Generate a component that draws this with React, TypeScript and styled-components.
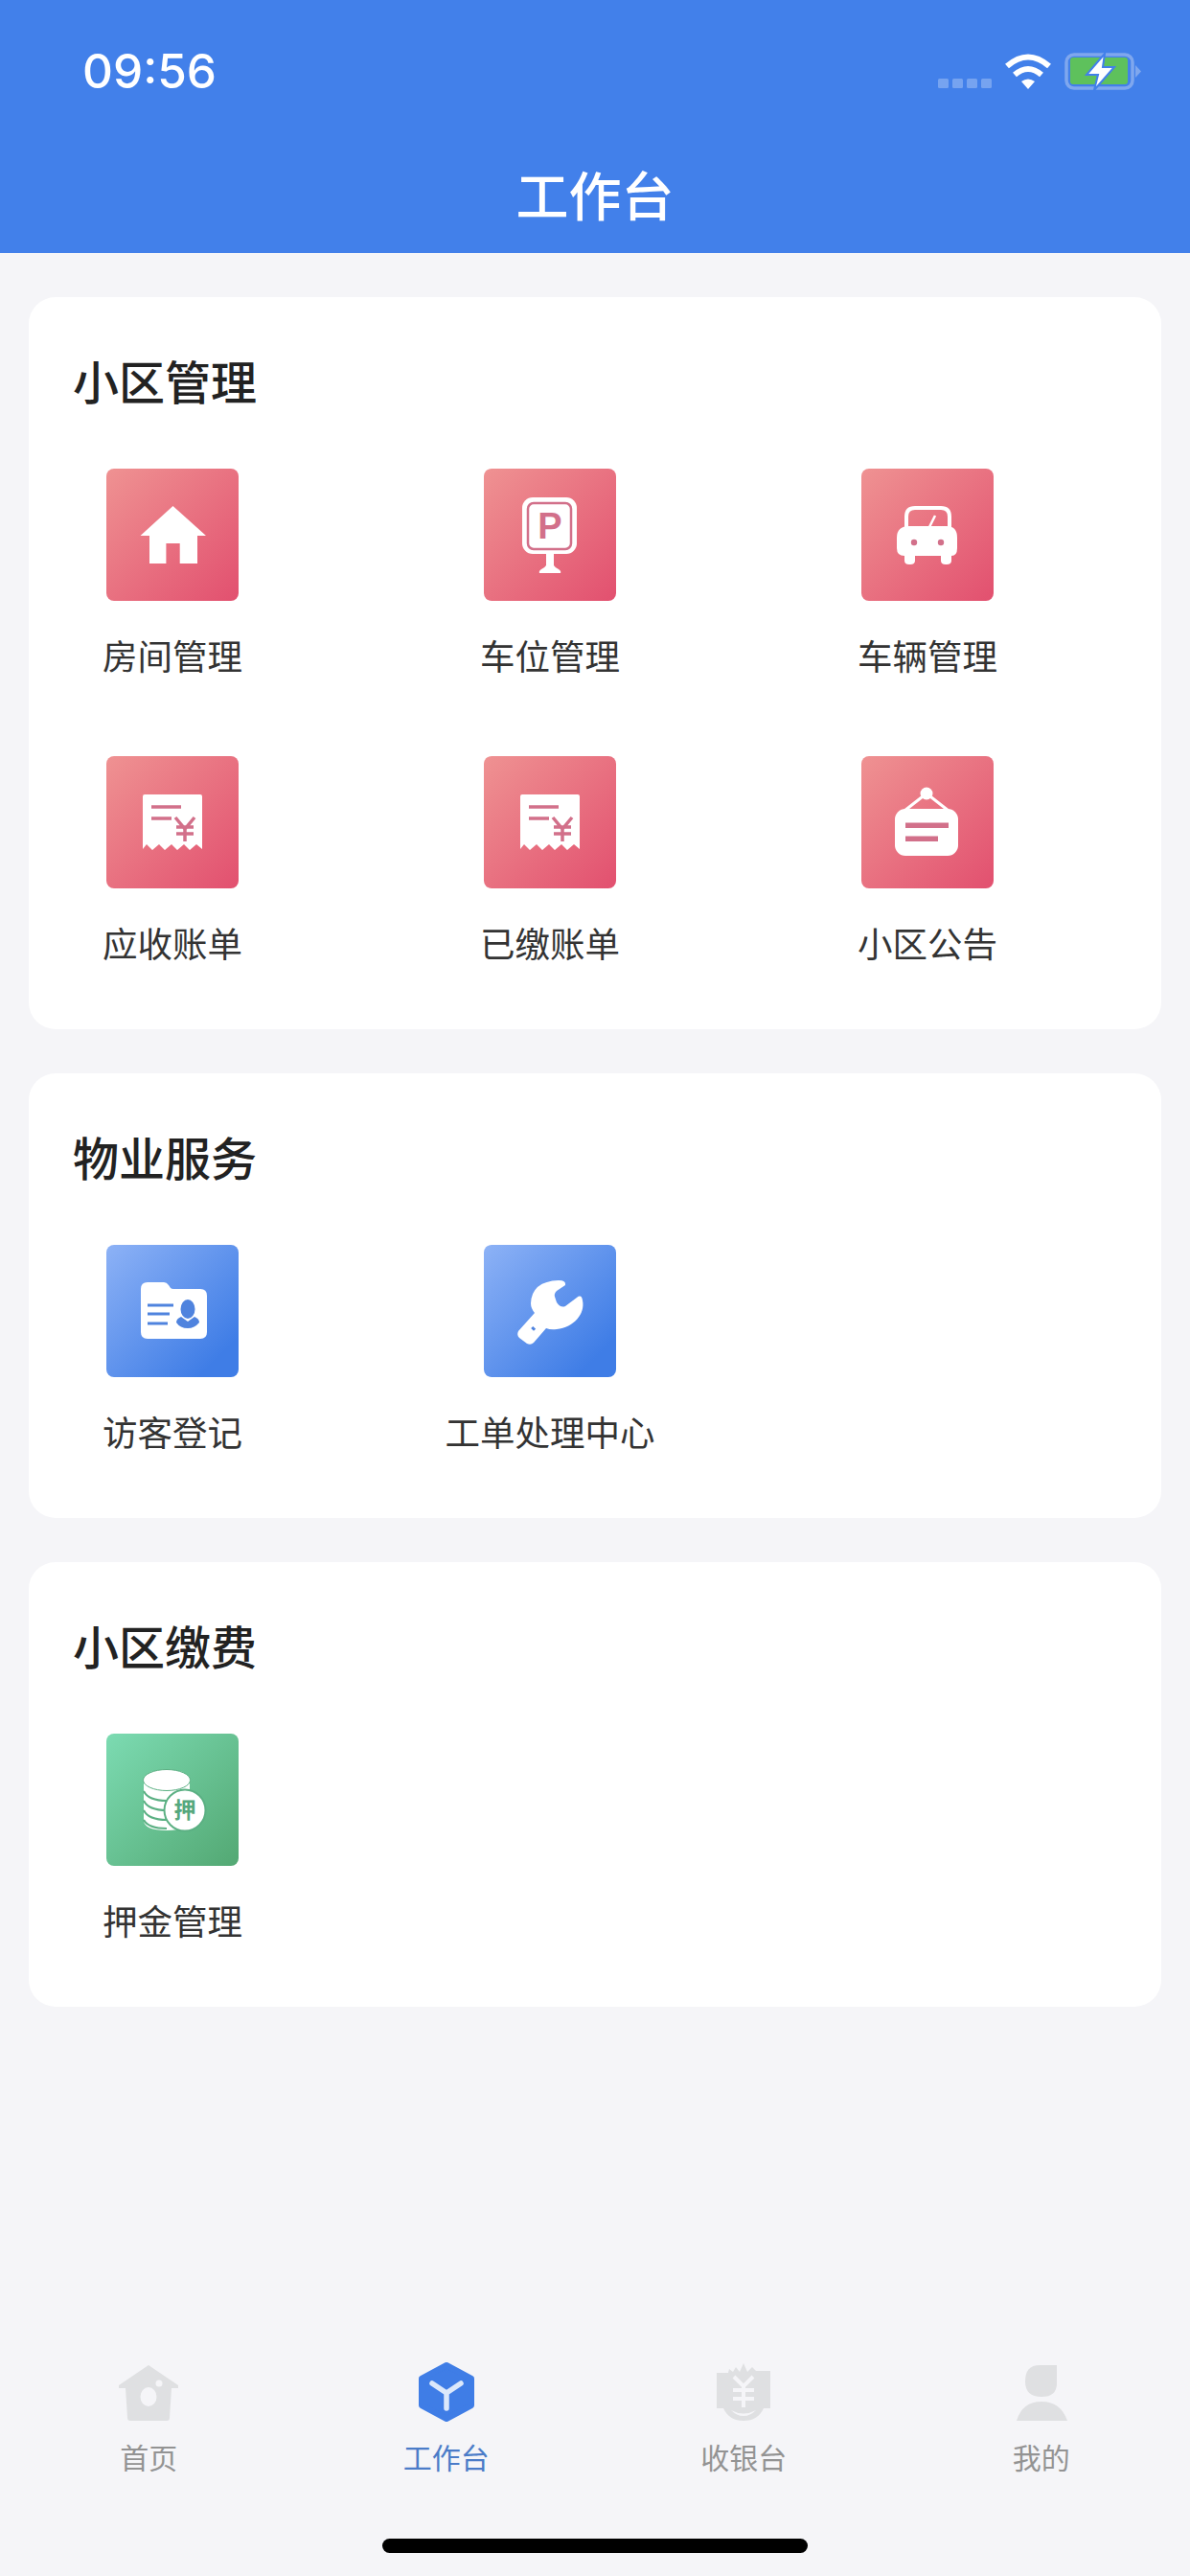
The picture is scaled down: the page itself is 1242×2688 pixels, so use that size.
import React from "react";
import styled, { createGlobalStyle } from "styled-components";

const Global = createGlobalStyle`
  html, body { margin: 0; padding: 0; background: #f5f5f8; }
  body { font-family: "Noto Sans CJK SC", "Noto Sans", sans-serif; }
  * { box-sizing: border-box; }
`;

const Page = styled.div`
  width: 1242px;
  height: 2688px;
  display: flex;
  flex-direction: column;
  background: #f5f5f8;
  overflow: hidden;
`;

const Header = styled.header`
  height: 264px;
  background: #4280ea;
  color: #fff;
  display: flex;
  flex-direction: column;
  flex: none;
`;

const StatusBar = styled.div`
  height: 164px;
  padding: 47px 51px 0 86px;
  display: flex;
  align-items: flex-start;
  justify-content: space-between;
`;

const Clock = styled.span`
  font-family: Inter, "Liberation Sans", sans-serif;
  font-size: 49.5px;
  line-height: 54px;
  font-weight: 500;
`;

const Title = styled.h1`
  margin: 0;
  text-align: center;
  font-size: 55px;
  line-height: 74px;
  font-weight: 500;
`;

const StatusIcons = styled.svg`
  width: 230px;
  height: 56px;
  display: block;
`;

const Main = styled.main`
  padding: 46px 30px 0;
  display: flex;
  flex-direction: column;
  gap: 46px;
`;

const Card = styled.section`
  background: #fff;
  border-radius: 28px;
  padding: 54px 0 65px;
`;

const CardTitle = styled.h2`
  margin: 0 0 61px;
  padding-left: 46px;
  font-size: 48px;
  line-height: 64px;
  font-weight: 500;
  color: #222;
`;

const Grid = styled.div`
  display: grid;
  grid-template-columns: repeat(3, 216px);
  column-gap: 178px;
  row-gap: 80px;
  padding-left: 42px;
`;

const Item = styled.div`
  display: flex;
  flex-direction: column;
  align-items: center;
`;

const Tile = styled.div<{ $tone: "red" | "blue" | "green" }>`
  width: 138px;
  height: 138px;
  border-radius: 8px;
  background: ${(p) =>
    p.$tone === "red"
      ? "linear-gradient(135deg, #ef9292 0%, #e2506f 100%)"
      : p.$tone === "blue"
        ? "linear-gradient(135deg, #8db2f6 0%, #3f7de6 85%)"
        : "linear-gradient(135deg, #7cdbb2 0%, #53a873 100%)"};
`;

const Glyph = styled.svg`
  width: 138px;
  height: 138px;
  display: block;
`;

const Label = styled.div`
  margin-top: 32px;
  font-size: 36.5px;
  line-height: 50px;
  color: #333;
  white-space: nowrap;
`;

const TabBar = styled.nav`
  margin-top: auto;
  display: grid;
  grid-template-columns: repeat(4, 1fr);
  flex: none;
`;

const Tab = styled.div`
  display: flex;
  flex-direction: column;
  align-items: center;
`;

const TabGlyph = styled.svg`
  width: 70px;
  height: 66px;
  display: block;
`;

const TabLabel = styled.div<{ $active?: boolean }>`
  margin-top: 14px;
  font-size: 30px;
  line-height: 40px;
  color: ${(p) => (p.$active ? "#4b7cc8" : "#939393")};
`;

const HomeBarRow = styled.div`
  height: 105px;
  padding-top: 66px;
  display: flex;
  justify-content: center;
  flex: none;
`;

const HomeBar = styled.div`
  width: 444px;
  height: 15px;
  border-radius: 8px;
  background: #000;
`;

const RED = "#d2708a";
const BLUE = "#4f83de";

const House = () => (
  <Glyph viewBox="0 0 138 138">
    <path fill="#fff" fillRule="evenodd" d="M69.5 39 104 70H95V99H76.7V78H62.4V99H45V70H35.5Z" />
  </Glyph>
);

const Parking = () => (
  <Glyph viewBox="0 0 138 138">
    <rect x="40" y="30" width="57" height="59" rx="11" fill="#fff" />
    <rect x="46" y="36" width="45" height="48" rx="6" fill="#fff" stroke={RED} strokeWidth="2.5" />
    <text x="69" y="73" textAnchor="middle" fontFamily="'Liberation Sans', sans-serif" fontWeight="700" fontSize="38" fill={RED}>P</text>
    <path fill="#fff" d="M65 89H73V101Q74 103 78 105Q81 107 80 109H58Q57 107 60 105Q64 103 65 101Z" />
  </Glyph>
);

const Car = () => (
  <Glyph viewBox="0 0 138 138">
    <path fill="none" stroke="#fff" strokeWidth="4" d="M47 64V50Q47 41 56 41H83Q92 41 92 50V64" />
    <path stroke="#fff" strokeWidth="2.5" d="M71 61 77 49" />
    <path fill="#fff" d="M50 60H89Q100 60 100 72V83Q100 91 94 91V96Q94 100 89 100H88Q83 100 83 96V91H56V96Q56 100 51 100H50Q45 100 45 96V91Q37 91 37 83V72Q37 60 50 60Z" />
    <circle cx="55" cy="77" r="3.2" fill={RED} />
    <circle cx="83" cy="77" r="3.2" fill={RED} />
  </Glyph>
);

const Bill = () => (
  <Glyph viewBox="0 0 138 138">
    <path fill="#fff" d="M40 40H98Q100 40 100 42V97L94 92 87 98 81 92 74 98 68 92 61 98 55 92 48 98 42 92 38 97V42Q38 40 40 40Z" />
    <path fill="none" stroke={RED} strokeWidth="3.5" d="M47 53H78M47 65H68M72 64 82 76 92 64M73 74H91M73 81H91M82 76V89" />
  </Glyph>
);

const Notice = () => (
  <Glyph viewBox="0 0 138 138">
    <path fill="none" stroke="#fff" strokeWidth="3" d="M45 57 68 39 91 57" />
    <circle cx="68" cy="39" r="6.5" fill="#fff" />
    <rect x="35" y="55" width="66" height="49" rx="11" fill="#fff" />
    <rect x="46" y="69.500" width="45" height="5.500" fill={RED} />
    <rect x="46" y="83.500" width="34" height="5.500" fill={RED} />
  </Glyph>
);

const Visitor = () => (
  <Glyph viewBox="0 0 138 138">
    <path fill="#fff" d="M43 39H60Q63 39 65 42L67 45Q68 46 70 46H98Q105 46 105 53V91Q105 98 98 98H43Q36 98 36 91V46Q36 39 43 39Z" />
    <path fill="none" stroke={BLUE} strokeWidth="3" d="M43 63H70M43 72H66M43 82H64" />
    <ellipse cx="85" cy="67" rx="7.500" ry="10" fill={BLUE} />
    <path fill={BLUE} d="M78 75 85 80 92 75Q97 77 97 81 92 87 85 87 77 87 73 81 73 77 78 75Z" />
  </Glyph>
);

const Wrench = () => (
  <Glyph viewBox="0 0 138 138">
    <path fill="#fff" d="M78 37Q50 38 49 61Q49 66 53 71L36 90Q34 94 37 97L45 103Q49 105 52 102L65 87Q70 89 76 88C94 86 106 72 103 58Q102 51 97 55L85 64Q80 66 76 60L74 54Q73 51 76 48L85 42Q86 37 78 37Z" />
    <rect x="50" y="86" width="4" height="3" fill={BLUE} transform="rotate(45 52 87)" />
  </Glyph>
);

const Coins = () => (
  <Glyph viewBox="0 0 138 138">
    <path fill="#fff" d="M39 49H87V90Q87 101 63 101 39 101 39 90Z" />
    <path fill="none" stroke="#5bb083" strokeWidth="2" d="M39 60Q44 70 63 70T87 60M39 70Q44 80 63 80T87 70M39 80Q44 90 63 90T87 80M39 90Q44 99 63 99" />
    <ellipse cx="63" cy="48.500" rx="24.500" ry="11" fill="#fff" stroke="#5bb083" strokeWidth="1" />
    <circle cx="82" cy="80" r="21.500" fill="#fff" stroke="#5bb083" strokeWidth="2" />
    <text x="82" y="88" textAnchor="middle" fontFamily="'Noto Sans CJK SC', sans-serif" fontWeight="700" fontSize="23" fill="#55a87d">押</text>
  </Glyph>
);

const sections = [
  {
    title: "小区管理",
    tone: "red" as const,
    items: [
      ["房间管理", <House />],
      ["车位管理", <Parking />],
      ["车辆管理", <Car />],
      ["应收账单", <Bill />],
      ["已缴账单", <Bill />],
      ["小区公告", <Notice />],
    ] as const,
  },
  {
    title: "物业服务",
    tone: "blue" as const,
    items: [
      ["访客登记", <Visitor />],
      ["工单处理中心", <Wrench />],
    ] as const,
  },
  {
    title: "小区缴费",
    tone: "green" as const,
    items: [["押金管理", <Coins />]] as const,
  },
];

const GREY = "#dfe0e2";

export default function App() {
  return (
    <Page>
      <Global />
      <Header>
        <StatusBar>
          <Clock>09:56</Clock>
          <StatusIcons viewBox="0 0 230 56">
            <g fill="#fff" fillOpacity="0.28">
              <rect x="18" y="35" width="11" height="10" rx="1.500" />
              <rect x="33" y="35" width="11" height="10" rx="1.500" />
              <rect x="48" y="35" width="11" height="10" rx="1.500" />
              <rect x="63" y="35" width="11" height="10" rx="1.500" />
            </g>
            <path fill="none" stroke="#fff" strokeWidth="6" d="M90 22Q112 3 134 22M98 31Q112 19 126 31" />
            <path fill="#fff" d="M105 38Q112 33 119 38L112 46Z" />
            <rect x="152" y="10" width="69" height="35" rx="8" fill="none" stroke="#7fa7ee" strokeWidth="3.500" />
            <rect x="156" y="13" width="60" height="28" rx="3" fill="#5ec15c" />
            <path fill="#7fa7ee" d="M224 21 230 27.500 224 34Z" />
            <path fill="#fff" stroke="#4280ea" strokeWidth="2" d="M192 9 173 31H185L181 47 202 23H190Z" />
          </StatusIcons>
        </StatusBar>
        <Title>工作台</Title>
      </Header>
      <Main>
        {sections.map((s) => (
          <Card key={s.title}>
            <CardTitle>{s.title}</CardTitle>
            <Grid>
              {s.items.map(([label, icon]) => (
                <Item key={label}>
                  <Tile $tone={s.tone}>{icon}</Tile>
                  <Label>{label}</Label>
                </Item>
              ))}
            </Grid>
          </Card>
        ))}
      </Main>
      <TabBar>
        <Tab>
          <TabGlyph viewBox="0 0 70 66">
            <path fill={GREY} fillRule="evenodd" d="M35 5 66 26V29H59L57 60Q57 63 54 63H16Q13 63 13 60L11 29H4V26ZM35 28A8.500 10 0 1 0 35 48 8.500 10 0 1 0 35 28Z" />
            <circle cx="46" cy="24" r="3.500" fill="#f5f5f8" />
          </TabGlyph>
          <TabLabel>首页</TabLabel>
        </Tab>
        <Tab>
          <TabGlyph viewBox="0 0 70 66">
            <path fill="#3f7de6" stroke="#3f7de6" strokeWidth="6" strokeLinejoin="round" d="M35 5 61 19V47L35 61 9 47V19Z" />
            <path fill="none" stroke="#dbe8fb" strokeWidth="5.500" strokeLinecap="round" d="M20 24 35 34 50 24M35 34V50" />
          </TabGlyph>
          <TabLabel $active>工作台</TabLabel>
        </Tab>
        <Tab>
          <TabGlyph viewBox="0 0 70 66">
            <path fill={GREY} d="M7 13H19L20 9 24 12 27 7 31 12 35 3 39 12 44 7 48 11H63V50H56Q50 63 35 63 20 63 14 50H7Z" />
            <path fill="none" stroke="#f5f5f8" strokeWidth="4" d="M25 17 35 27 45 17M24 31H46M24 40H46M35 27V49" />
            <path fill="#f5f5f8" d="M22 52Q35 59 48 52 42 58 35 58 28 58 22 52Z" />
          </TabGlyph>
          <TabLabel>收银台</TabLabel>
        </Tab>
        <Tab>
          <TabGlyph viewBox="0 0 70 66">
            <path fill={GREY} d="M33 5H51V24Q51 38 35 38 18 38 18 22 18 5 33 5Z" />
            <path fill={GREY} d="M9 63Q15 43 35 43 55 43 62 63Z" />
          </TabGlyph>
          <TabLabel>我的</TabLabel>
        </Tab>
      </TabBar>
      <HomeBarRow>
        <HomeBar />
      </HomeBarRow>
    </Page>
  );
}
